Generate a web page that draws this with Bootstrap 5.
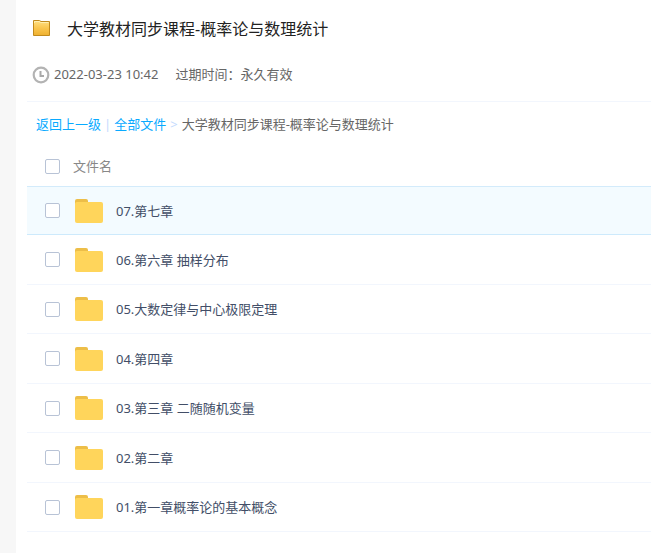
<!DOCTYPE html>
<html lang="zh-CN">
<head>
<meta charset="utf-8">
<meta name="viewport" content="width=device-width, initial-scale=1">
<title>大学教材同步课程-概率论与数理统计</title>
<link href="https://cdn.jsdelivr.net/npm/bootstrap@5.3.0/dist/css/bootstrap.min.css" rel="stylesheet">
<style>
  body { background: #f7f7f7; color: #666; font: 13px/20px "Noto Sans", "Noto Sans CJK SC", sans-serif; }
  .share-panel { margin-left: 16px; padding: 14px 0 16px 11px; }
  .share-head { padding: 0 5px 17px; border-bottom: 1px solid #f2f6fd; }
  .share-title { font-size: 16px; line-height: 30px; color: #222; font-weight: 400; gap: 16px; }
  .share-meta { margin-top: 20px; gap: 4px; }
  .share-expiry { margin-left: 13px; }
  .crumbs { padding: 12px 9px; gap: 4px; }
  .crumbs a { color: #09aaff; }
  .crumbs .sep { color: #c4dbfe; }
  .crumbs .bar { margin: 0 -1px; }
  .file-table { border-collapse: separate; border-spacing: 0; }
  .file-table th { height: 40px; padding: 0; font-weight: 400; color: #888; }
  .file-table td { height: 49px; padding: 0; border-bottom: 1px solid #f2f6fd; color: #424e67; }
  .file-table tbody tr:nth-child(even) td { height: 50px; }
  .file-table tr.active-row td { background: #f3fbff; border-top: 1px solid #d3ebfb; border-bottom-color: #cdeafc; }
  .pick-cell { width: 46px; }
  .file-table .pick { display: block; margin: 0 0 0 18px; width: 15px; height: 15px; border: 1px solid #b8c3d6; border-radius: 2px; }
  .file-label { gap: 13px; margin-left: 2px; }
</style>
<script src="https://cdn.jsdelivr.net/npm/bootstrap@5.3.0/dist/js/bootstrap.bundle.min.js"></script>
</head>
<body>
<svg class="d-none" aria-hidden="true">
  <symbol id="folder" viewBox="0 0 28 24">
    <path d="M0 8V2Q0 0 2 0H11Q13 0 13 2V8Z" fill="#edbe48"/>
    <path d="M0 5Q0 3 2 3H26Q28 3 28 5V22Q28 24 26 24H2Q0 24 0 22Z" fill="#ffd55b"/>
  </symbol>
</svg>
<main class="share-panel bg-white min-vh-100">
  <header class="share-head">
    <h1 class="share-title d-flex align-items-center mb-0">
      <svg class="mb-1" width="19" height="18" viewBox="0 0 19 18" aria-hidden="true">
        <defs><linearGradient id="gold" x2="0" y2="1"><stop stop-color="#ffe184"/><stop offset=".5" stop-color="#fac64f"/><stop offset="1" stop-color="#eeb02f"/></linearGradient></defs>
        <path d="M1.5 17.5V2.5H7.5L9 3.5H17.5V17.5Z" fill="url(#gold)" stroke="#c18a1c"/>
        <path d="M2.5 5V3.5H7L8.5 4.5H16.5" fill="none" stroke="#ffefaf"/>
      </svg>
      <span>大学教材同步课程-概率论与数理统计</span>
    </h1>
    <div class="share-meta d-flex align-items-center">
      <svg width="18" height="20" viewBox="0 0 18 20" fill="none" aria-hidden="true">
        <circle cx="9" cy="11" r="7.3" stroke="#b3b3b3" stroke-width="2.2"/>
        <path d="M8.5 7V12H12" stroke="#aaa" stroke-width="2"/>
      </svg>
      <time datetime="2022-03-23T10:42">2022-03-23 10:42</time>
      <span class="share-expiry">过期时间：永久有效</span>
    </div>
  </header>
  <nav class="crumbs d-flex" aria-label="路径">
    <a class="text-decoration-none" href="#up">返回上一级</a>
    <span class="sep bar">|</span>
    <a class="text-decoration-none" href="#all">全部文件</a>
    <span class="sep">&gt;</span>
    <span>大学教材同步课程-概率论与数理统计</span>
  </nav>
  <table class="file-table w-100">
    <thead>
      <tr><th class="pick-cell"><input class="form-check-input pick" type="checkbox" aria-label="全选"></th><th scope="col">文件名</th></tr>
    </thead>
    <tbody>
      <tr class="active-row"><td><input class="form-check-input pick" type="checkbox" id="f7"></td><td><label class="file-label d-flex align-items-center" for="f7"><svg width="28" height="24" aria-hidden="true"><use href="#folder"/></svg>07.第七章</label></td></tr>
      <tr><td><input class="form-check-input pick" type="checkbox" id="f6"></td><td><label class="file-label d-flex align-items-center" for="f6"><svg width="28" height="24" aria-hidden="true"><use href="#folder"/></svg>06.第六章 抽样分布</label></td></tr>
      <tr><td><input class="form-check-input pick" type="checkbox" id="f5"></td><td><label class="file-label d-flex align-items-center" for="f5"><svg width="28" height="24" aria-hidden="true"><use href="#folder"/></svg>05.大数定律与中心极限定理</label></td></tr>
      <tr><td><input class="form-check-input pick" type="checkbox" id="f4"></td><td><label class="file-label d-flex align-items-center" for="f4"><svg width="28" height="24" aria-hidden="true"><use href="#folder"/></svg>04.第四章</label></td></tr>
      <tr><td><input class="form-check-input pick" type="checkbox" id="f3"></td><td><label class="file-label d-flex align-items-center" for="f3"><svg width="28" height="24" aria-hidden="true"><use href="#folder"/></svg>03.第三章 二随随机变量</label></td></tr>
      <tr><td><input class="form-check-input pick" type="checkbox" id="f2"></td><td><label class="file-label d-flex align-items-center" for="f2"><svg width="28" height="24" aria-hidden="true"><use href="#folder"/></svg>02.第二章</label></td></tr>
      <tr><td><input class="form-check-input pick" type="checkbox" id="f1"></td><td><label class="file-label d-flex align-items-center" for="f1"><svg width="28" height="24" aria-hidden="true"><use href="#folder"/></svg>01.第一章概率论的基本概念</label></td></tr>
    </tbody>
  </table>
</main>
</body>
</html>
